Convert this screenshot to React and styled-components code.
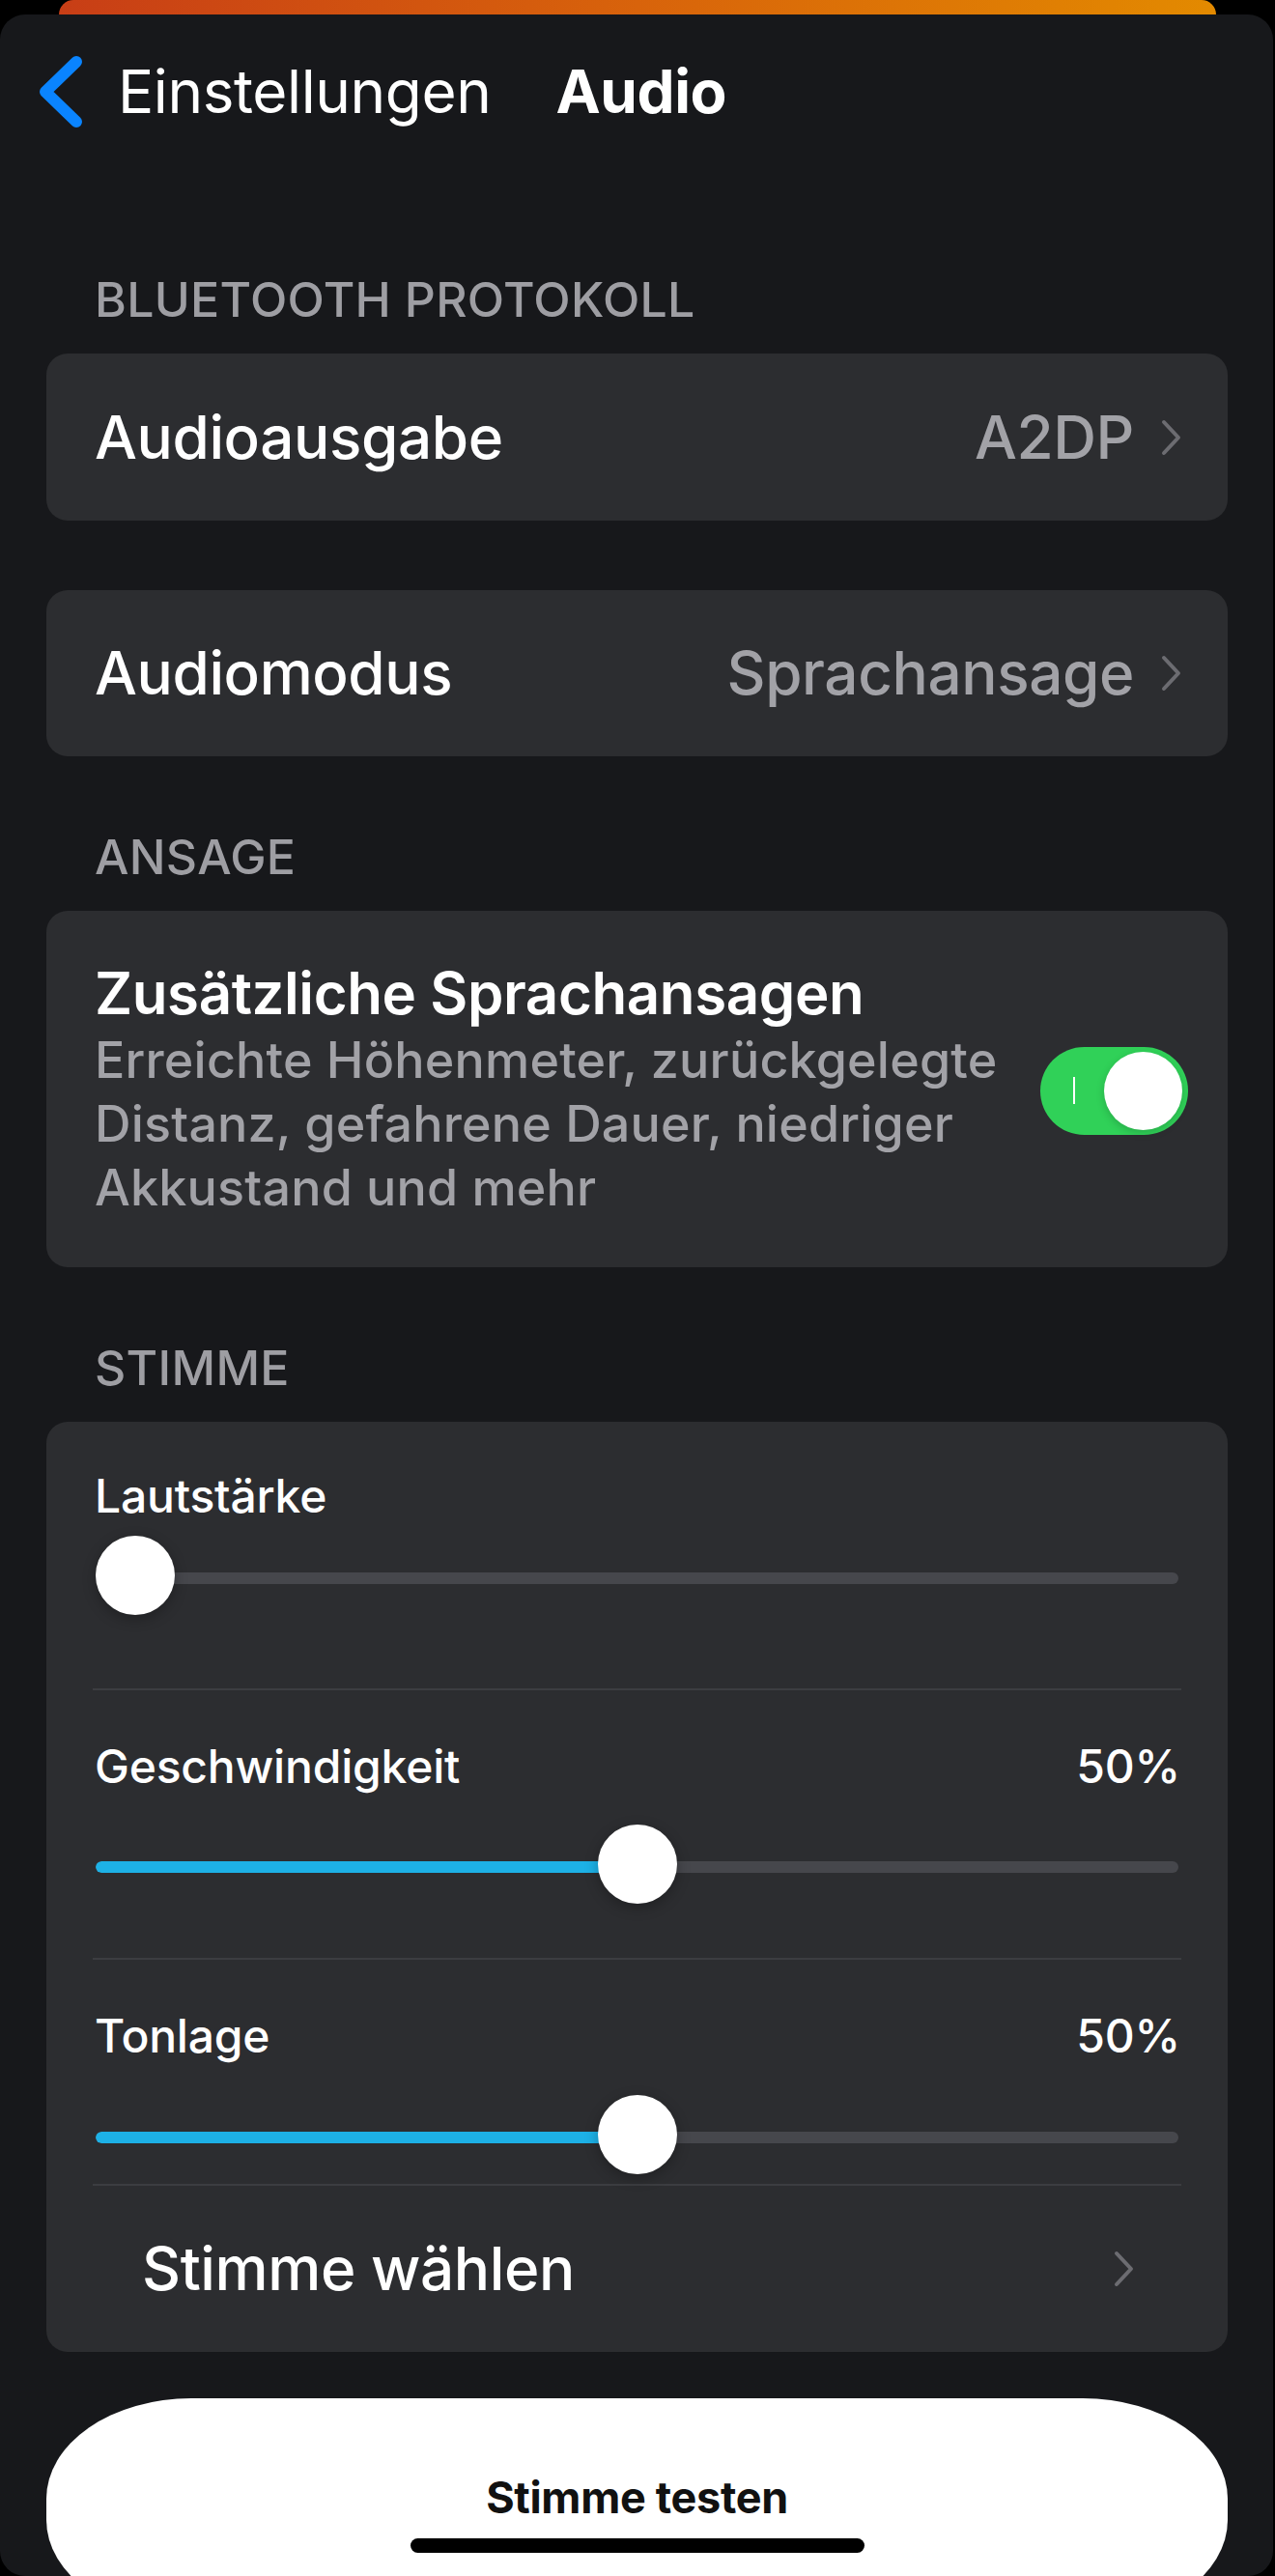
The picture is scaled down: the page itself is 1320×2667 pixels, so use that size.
import React from "react";
import styled, { createGlobalStyle } from "styled-components";

const GlobalStyle = createGlobalStyle`
  html, body {
    margin: 0;
    padding: 0;
    background: #000;
  }
  body {
    font-family: Inter, "Noto Sans", sans-serif;
    -webkit-font-smoothing: antialiased;
  }
`;

const Screen = styled.div`
  position: relative;
  width: 1320px;
  height: 2667px;
  overflow: hidden;
  background: #000;
  display: flex;
  flex-direction: column;
`;

const BehindCard = styled.div`
  flex-shrink: 0;
  height: 15px;
  margin: 0 61px;
  border-radius: 22px 22px 0 0;
  background: linear-gradient(90deg, #c83e16 0%, #d8630b 50%, #e38a00 100%);
`;

const Sheet = styled.div`
  flex: 1;
  margin-right: 2px;
  background: #17181b;
  border-radius: 26px;
  overflow: hidden;
  display: flex;
  flex-direction: column;
`;

const Nav = styled.header`
  flex-shrink: 0;
  height: 160px;
  display: flex;
  align-items: center;
  padding-left: 40px;
`;

const BackIcon = styled.svg`
  width: 46px;
  height: 76px;
  margin-right: 36px;
`;

const NavBack = styled.span`
  font-size: 62px;
  line-height: 1;
  font-weight: 400;
  color: #fff;
  letter-spacing: -0.4px;
`;

const NavTitle = styled.h1`
  margin: 0 0 0 67px;
  font-size: 62px;
  line-height: 1;
  font-weight: 700;
  color: #fff;
  letter-spacing: -0.4px;
`;

const Content = styled.main`
  padding: 0 47px 0 48px;
  display: flex;
  flex-direction: column;
`;

const SectionTitle = styled.h2`
  margin: ${(p) => (p.$first ? "111px" : "80px")} 0 32px;
  padding-left: 50px;
  font-size: 50px;
  line-height: 48px;
  font-weight: 500;
  color: #9e9ea3;
  letter-spacing: 0.3px;
`;

const Card = styled.section`
  margin-top: ${(p) => p.$gap || 0}px;
  background: #2c2d30;
  border-radius: 22px;
`;

const LinkRow = styled.div`
  height: ${(p) => p.$height || 173}px;
  display: flex;
  align-items: center;
  padding: 0 46px 0 50px;
`;

const RowLabel = styled.span`
  font-size: 62px;
  line-height: 1;
  font-weight: 500;
  color: #fff;
  letter-spacing: -0.4px;
`;

const RowValue = styled.span`
  margin-left: auto;
  font-size: 62px;
  line-height: 1;
  font-weight: 500;
  color: #a2a2a7;
  letter-spacing: -0.4px;
`;

const ChevronIcon = styled.svg`
  width: 25px;
  height: 40px;
  margin-left: ${(p) => (p.$auto ? "auto" : "26px")};
`;

const ToggleRow = styled.div`
  display: flex;
  align-items: center;
  padding: 52px 41px 49px 50px;
`;

const TextCol = styled.div`
  flex: 1;
`;

const ToggleTitle = styled.div`
  font-size: 60px;
  line-height: 66px;
  font-weight: 600;
  color: #fff;
  letter-spacing: -0.4px;
`;

const ToggleDesc = styled.div`
  margin-top: 4px;
  font-size: 52px;
  line-height: 66px;
  font-weight: 500;
  color: #a2a2a7;
  letter-spacing: 0.2px;
`;

const Switch = styled.div`
  width: 153px;
  height: 91px;
  flex-shrink: 0;
  box-sizing: border-box;
  border-radius: 46px;
  background: ${(p) => (p.$on ? "#30d158" : "#39393d")};
  display: flex;
  align-items: center;
  padding: 0 6px 0 34px;
`;

const SwitchMark = styled.span`
  width: 2px;
  height: 28px;
  background: #fff;
`;

const SwitchKnob = styled.span`
  margin-left: auto;
  width: 81px;
  height: 81px;
  border-radius: 50%;
  background: #fff;
  box-shadow: 0 3px 8px rgba(0, 0, 0, 0.18);
`;

const SliderBlock = styled.div`
  margin: 0 48px;
  padding: ${(p) => p.$pad};
  border-bottom: 2px solid #3c3d41;
  display: flex;
  flex-direction: column;
  gap: ${(p) => p.$gap}px;
`;

const SliderHead = styled.div`
  display: flex;
  justify-content: space-between;
  font-size: 48px;
  line-height: 50px;
  font-weight: 500;
  color: #fff;
  letter-spacing: -0.2px;
  padding: 0 1px 0 2px;
`;

const SliderBox = styled.div`
  position: relative;
  height: 82px;
  margin: 0 3px;
`;

const SliderTrack = styled.div`
  position: absolute;
  left: 0;
  right: 0;
  top: 38px;
  height: 12px;
  border-radius: 6px;
  background: #46474c;
  overflow: hidden;
`;

const SliderFill = styled.div`
  height: 100%;
  background: #1db1e6;
  border-radius: 6px 0 0 6px;
`;

const SliderThumb = styled.div`
  position: absolute;
  top: 0;
  width: 82px;
  height: 82px;
  border-radius: 50%;
  background: #fff;
  box-shadow: 0 4px 14px rgba(0, 0, 0, 0.28);
`;

const ChooseRow = styled.div`
  height: 172px;
  display: flex;
  align-items: center;
  padding: 0 95px 0 99px;
`;

const ChooseLabel = styled.span`
  font-size: 62px;
  line-height: 1;
  font-weight: 500;
  color: #fff;
  letter-spacing: -0.4px;
`;

const TestButton = styled.button`
  margin-top: 48px;
  height: 230px;
  border: 0;
  background: #fff;
  border-radius: 150px / 104px;
  display: flex;
  justify-content: center;
  align-items: flex-start;
  padding: 78px 0 0;
  font-family: inherit;
  font-size: 45px;
  line-height: 50px;
  font-weight: 700;
  color: #111;
  letter-spacing: -0.3px;
`;

const HomeIndicator = styled.div`
  position: absolute;
  left: 425px;
  bottom: 24px;
  width: 470px;
  height: 15px;
  border-radius: 8px;
  background: #000;
`;

const TRACK_W = 1121;
const THUMB = 82;

const Slider = ({ value }) => {
  const left = (value / 100) * (TRACK_W - THUMB);
  return (
    <SliderBox>
      <SliderTrack>
        <SliderFill style={{ width: value > 0 ? left + THUMB / 2 : 0 }} />
      </SliderTrack>
      <SliderThumb style={{ left }} />
    </SliderBox>
  );
};

const Chevron = ({ auto }) => (
  <ChevronIcon $auto={auto} viewBox="0 0 25 40">
    <path
      d="M5 4 L20 20 L5 36"
      fill="none"
      stroke="#6c6c71"
      strokeWidth="4"
      strokeLinecap="round"
      strokeLinejoin="round"
    />
  </ChevronIcon>
);

export default function App() {
  return (
    <Screen>
      <GlobalStyle />
      <BehindCard />
      <Sheet>
        <Nav>
          <BackIcon viewBox="0 0 46 76">
            <path
              d="M39 7 L7 38 L39 69"
              fill="none"
              stroke="#0a84ff"
              strokeWidth="12"
              strokeLinecap="round"
              strokeLinejoin="round"
            />
          </BackIcon>
          <NavBack>Einstellungen</NavBack>
          <NavTitle>Audio</NavTitle>
        </Nav>

        <Content>
          <SectionTitle $first>BLUETOOTH PROTOKOLL</SectionTitle>
          <Card>
            <LinkRow>
              <RowLabel>Audioausgabe</RowLabel>
              <RowValue>A2DP</RowValue>
              <Chevron />
            </LinkRow>
          </Card>
          <Card $gap={72}>
            <LinkRow $height={172}>
              <RowLabel>Audiomodus</RowLabel>
              <RowValue>Sprachansage</RowValue>
              <Chevron />
            </LinkRow>
          </Card>

          <SectionTitle>ANSAGE</SectionTitle>
          <Card>
            <ToggleRow>
              <TextCol>
                <ToggleTitle>Zusätzliche Sprachansagen</ToggleTitle>
                <ToggleDesc>
                  Erreichte Höhenmeter, zurückgelegte
                  <br />
                  Distanz, gefahrene Dauer, niedriger
                  <br />
                  Akkustand und mehr
                </ToggleDesc>
              </TextCol>
              <Switch $on>
                <SwitchMark />
                <SwitchKnob />
              </Switch>
            </ToggleRow>
          </Card>

          <SectionTitle>STIMME</SectionTitle>
          <Card>
            <SliderBlock $pad="52px 0 76px" $gap={16}>
              <SliderHead>
                <span>Lautstärke</span>
              </SliderHead>
              <Slider value={0} />
            </SliderBlock>
            <SliderBlock $pad="54px 0 56px" $gap={35}>
              <SliderHead>
                <span>Geschwindigkeit</span>
                <span>50%</span>
              </SliderHead>
              <Slider value={50} />
            </SliderBlock>
            <SliderBlock $pad="54px 0 10px" $gap={36}>
              <SliderHead>
                <span>Tonlage</span>
                <span>50%</span>
              </SliderHead>
              <Slider value={50} />
            </SliderBlock>
            <ChooseRow>
              <ChooseLabel>Stimme wählen</ChooseLabel>
              <Chevron auto />
            </ChooseRow>
          </Card>

          <TestButton>Stimme testen</TestButton>
        </Content>
      </Sheet>
      <HomeIndicator />
    </Screen>
  );
}
